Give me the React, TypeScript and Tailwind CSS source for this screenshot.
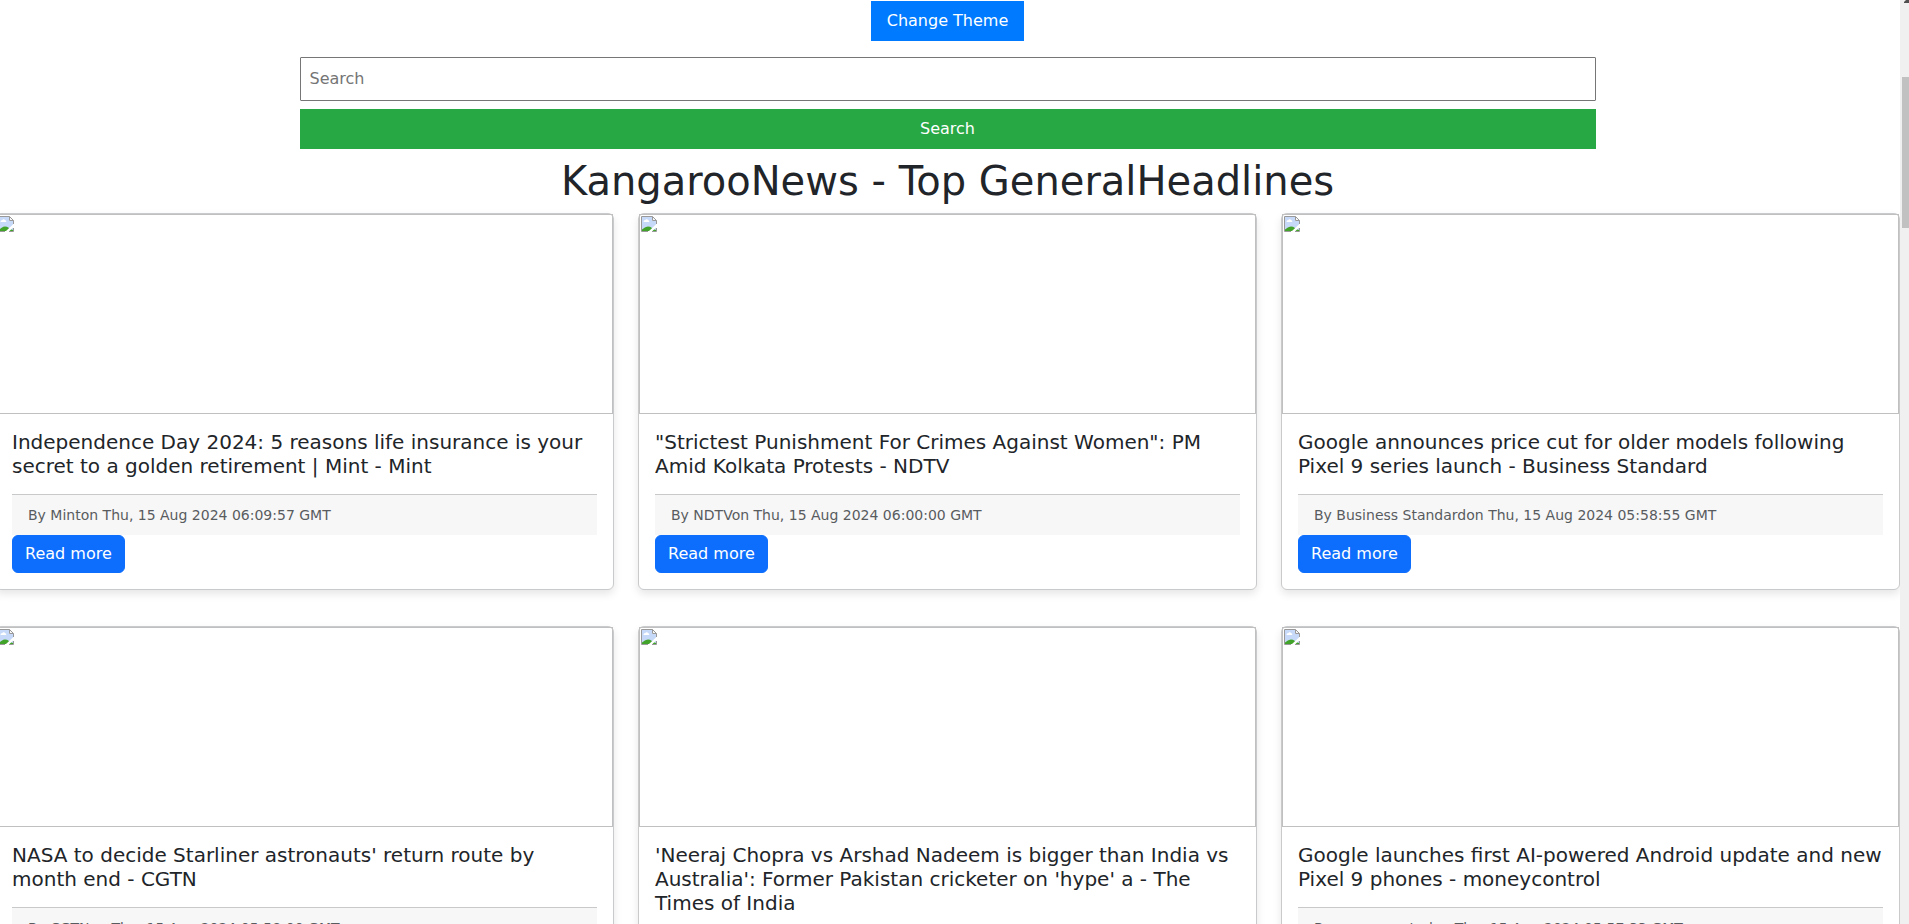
import React from "react";

type Article = { title: string; source: string; date: string };

const articles: Article[] = [
  {
    title: "Independence Day 2024: 5 reasons life insurance is your secret to a golden retirement | Mint - Mint",
    source: "Mint",
    date: "Thu, 15 Aug 2024 06:09:57 GMT",
  },
  {
    title: "\"Strictest Punishment For Crimes Against Women\": PM Amid Kolkata Protests - NDTV",
    source: "NDTV",
    date: "Thu, 15 Aug 2024 06:00:00 GMT",
  },
  {
    title: "Google announces price cut for older models following Pixel 9 series launch - Business Standard",
    source: "Business Standard",
    date: "Thu, 15 Aug 2024 05:58:55 GMT",
  },
  {
    title: "NASA to decide Starliner astronauts' return route by month end - CGTN",
    source: "CGTN",
    date: "Thu, 15 Aug 2024 05:58:00 GMT",
  },
  {
    title: "'Neeraj Chopra vs Arshad Nadeem is bigger than India vs Australia': Former Pakistan cricketer on 'hype' a - The Times of India",
    source: "The Times of India",
    date: "Thu, 15 Aug 2024 05:57:40 GMT",
  },
  {
    title: "Google launches first AI-powered Android update and new Pixel 9 phones - moneycontrol",
    source: "moneycontrol",
    date: "Thu, 15 Aug 2024 05:57:33 GMT",
  },
];

function MissingImage() {
  return (
    <svg width="16" height="16" viewBox="0 0 16 16" aria-hidden="true">
      <path d="M1 1H11V5H15V15H1Z" fill="#c6d9f8" />
      <path d="M2.500 6C2.500 4.500 3.500 4.200 4.200 4.300C4.600 2.800 6.800 2.800 7.200 4.200C8.600 4.300 8.600 6 7.800 6Z" fill="#fff" />
      <path d="M1 15V13.500C2.500 13 4 10.500 7 10.500C10 10.500 11 12 12 13L15 14V15Z" fill="#42a32a" />
      <path d="M16 7.500V10.500L10.500 16H7L8.500 14.500Z" fill="#fff" />
      <path d="M11.500 0.500V4.500H15.500Z" fill="#f7f7f7" />
      <path d="M7 15.500H0.500V0.500H11.500L15.500 4.500V8M11.500 0.500V4.500H15.500M15.500 12V15.500H11" fill="none" stroke="#999" />
    </svg>
  );
}

function NewsCard({ article }: { article: Article }) {
  return (
    <article className="flex flex-col rounded-md border border-[#c9cacb] bg-white shadow-[0_4px_8px_rgba(0,0,0,0.1)]">
      <div className="h-[200px] border border-[#c0c0c0] p-px">
        <MissingImage />
      </div>
      <div className="p-4">
        <h5 className="mb-4 text-[20px] leading-6">{article.title}</h5>
        <p className="border-t border-[#c8c9ca] bg-[#f7f7f7] px-4 py-2.5 text-sm leading-5 text-[#595c5f]">
          By {article.source}on {article.date}
        </p>
        <a
          href="#article"
          className="inline-block rounded-md border border-[#0d6efd] bg-[#0d6efd] px-3 py-1.5 align-top text-base text-white"
        >
          Read more
        </a>
      </div>
    </article>
  );
}

function ScrollTrack() {
  return (
    <div className="w-[9px] shrink-0 bg-[#f0f0f0] pl-0.5" aria-hidden="true">
      <svg className="block" width="7" height="77" viewBox="0 0 7 77">
        <path d="M2 3V2L5 -1H7V3Z" fill="#505050" />
      </svg>
      <div className="h-[151px] bg-[#c1c1c1]" />
    </div>
  );
}

export default function App() {
  return (
    <div className="flex h-screen overflow-hidden bg-white font-['DejaVu_Sans',sans-serif] text-[#212529]">
      <main className="min-w-0 flex-1 overflow-hidden">
        <div className="-ml-[5px] pt-px">
          <div className="mx-auto flex max-w-[1320px] flex-col px-3">
            <button type="button" className="self-center bg-[#007bff] px-4 py-2 text-base text-white">
              Change Theme
            </button>
            <form className="mt-4 flex flex-col gap-2" onSubmit={(e) => e.preventDefault()}>
              <input
                type="search"
                aria-label="Search"
                placeholder="Search"
                className="w-full rounded-[1px] border border-[#767676] bg-white px-[9px] py-[9px] text-base placeholder:text-[#757575]"
              />
              <button type="submit" className="bg-[#28a745] px-4 py-2 text-base text-white">
                Search
              </button>
            </form>
          </div>
          <h1 className="my-2 text-center text-[40px] leading-[48px]">
            KangarooNews - Top GeneralHeadlines
          </h1>
          <div className="grid grid-cols-3 gap-x-6 gap-y-9">
            {articles.map((article) => (
              <NewsCard key={article.title} article={article} />
            ))}
          </div>
        </div>
      </main>
      <ScrollTrack />
    </div>
  );
}
